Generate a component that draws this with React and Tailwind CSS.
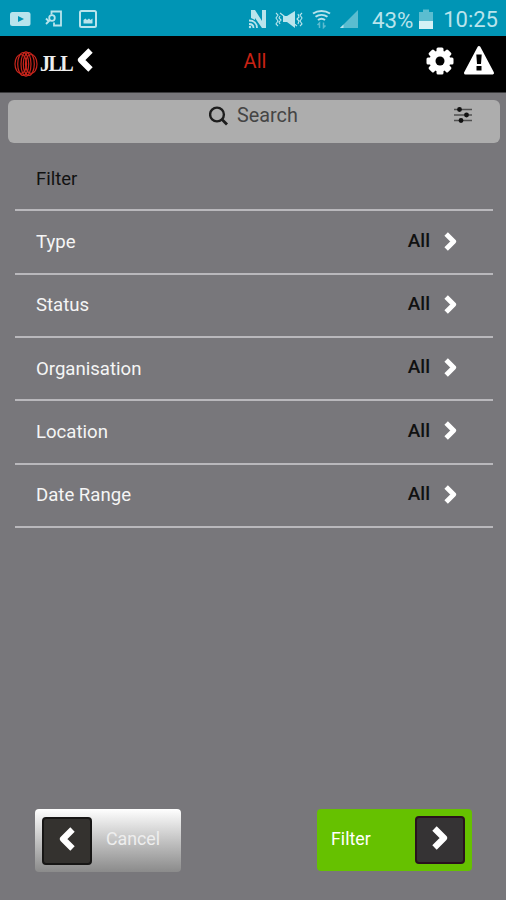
import React from "react";

const filters = [
  { name: "Type", value: "All" },
  { name: "Status", value: "All" },
  { name: "Organisation", value: "All" },
  { name: "Location", value: "All" },
  { name: "Date Range", value: "All" },
];

const Chevron = ({ left, className }) => (
  <svg viewBox="0 0 16 24" fill="none" stroke="currentColor" strokeWidth="6.2" strokeLinejoin="round" className={className}>
    <path d={left ? "M13.5 2.5 4 12l9.5 9.5" : "M2.5 2.5 12 12l-9.5 9.5"} />
  </svg>
);

const StatusBar = () => (
  <div className="flex h-9 shrink-0 items-center bg-[#0095b5] pl-2.5 pr-2 pt-0.5 text-[#b9e4ec]">
    <svg viewBox="0 0 21 14" className="h-3.5 w-[21px]">
      <rect width="20.5" height="14" rx="2.5" fill="currentColor" />
      <path d="M8 4v6l6-3z" fill="#0095b5" />
    </svg>
    <svg viewBox="0 0 18 18" fill="none" stroke="currentColor" strokeWidth="1.8" className="ml-3.5 h-[18px] w-[18px]">
      <path d="M6.5 4.5V1.5H16v14H9v-3" />
      <circle cx="7" cy="8" r="2.8" />
      <path d="m5 10-4 4M1 8.5l3 3" />
    </svg>
    <svg viewBox="0 0 18 18" className="ml-4 h-[18px] w-[18px]">
      <rect x="1" y="1" width="16" height="16" rx="1.5" fill="none" stroke="currentColor" strokeWidth="2" />
      <path d="M4.5 13.5V10l2-1.500L8 10l2-1.500 1.500 1.500 2-1.500v5z" fill="currentColor" />
    </svg>

    <svg viewBox="0 0 19 20" className="ml-[151px] h-5 w-[19px]">
      <path d="M3 9V1h4l7 11V1h4v18h-4L7 9v2" fill="currentColor" />
      <path d="M1 11.5c5 0 8 3 8 7.5M1 15c3 0 4.500 1.500 4.500 4" fill="none" stroke="currentColor" strokeWidth="1.8" />
      <circle cx="2" cy="18" r="1.2" fill="currentColor" />
    </svg>
    <svg viewBox="0 0 28 20" className="ml-2 h-5 w-7">
      <path d="M8 7h4l8-5v17l-8-6H8z" fill="currentColor" />
      <path
        d="m5 4 17 13M1 4l2 2-2 3 2 3-2 3 2 2M5 7l-1 2 2 2-2 2 1 2M27 4l-2 2 2 3-2 3 2 3-2 2M23 5l1 3-2 2 2 2-1 3"
        fill="none"
        stroke="currentColor"
        strokeWidth="1.1"
      />
    </svg>
    <svg viewBox="0 0 20 20" fill="none" stroke="currentColor" className="ml-2 h-5 w-5">
      <path d="M2 4.500c5-3.500 12-3.500 17 0M4.500 7.800c3.500-2.500 8.500-2.500 12 0M7 11c2-1.500 5-1.500 7 0" strokeWidth="2" />
      <path d="M8.500 19v-5l-2 2M12.500 13.500v5l2-2" strokeWidth="1.5" opacity="0.5" />
    </svg>
    <svg viewBox="0 0 20 20" className="ml-2 h-5 w-5">
      <path d="M19 1v18H1z" fill="#5bbdd0" />
      <path d="M4.500 15.500V19H1z" fill="currentColor" />
    </svg>
    <span className="ml-[13px] w-[42px] whitespace-nowrap pt-0.5 text-[22.300px] leading-none">43%</span>
    <svg viewBox="0 0 14 20" className="ml-[5px] h-5 w-3.5">
      <path d="M0 3h4V0.500h6V3h4v9H0z" fill="#5bbdd0" />
      <path d="M0 12h14v8H0z" fill="#d4f1f5" />
    </svg>
    <span className="ml-auto whitespace-nowrap pt-0.5 text-[22px] leading-none">10:25</span>
  </div>
);

const Logo = () => (
  <div className="flex items-center">
    <svg viewBox="0 0 24 26" fill="none" stroke="#c9251c" strokeWidth="1.2" className="h-[26px] w-6">
      <ellipse cx="6.800" cy="13" rx="5.800" ry="9.500" />
      <ellipse cx="9.200" cy="13" rx="5.500" ry="11.500" />
      <ellipse cx="12" cy="13" rx="5" ry="12.200" />
      <ellipse cx="14.800" cy="13" rx="5.500" ry="11.500" />
      <ellipse cx="17.200" cy="13" rx="5.800" ry="9.500" />
    </svg>
    <span className="ml-0.5 w-[33px] whitespace-nowrap">
      <span className="inline-block origin-left scale-x-[0.84] font-['Liberation_Serif',serif] text-[24px] font-bold leading-[26px] tracking-[-2px] text-[#eeeeee]">
        JLL
      </span>
    </span>
  </div>
);

const Header = () => (
  <header className="grid h-[57px] shrink-0 grid-cols-[1fr_auto_1fr] items-start border-b border-[#3b3b3d] bg-black pl-3.5 pr-[11px] pt-2 text-white">
    <div className="flex items-start">
      <div className="pt-1.5">
        <Logo />
      </div>
      <Chevron left className="ml-1 mt-1 h-6 w-4" />
    </div>
    <h1 className="pl-px pt-[5px] text-[20px] leading-6 text-[#c92214]">All</h1>
    <div className="flex items-start justify-end">
      <svg viewBox="0 0 28 28" className="mt-[3px] h-7 w-7">
        <g fill="currentColor">
          <rect x="10.500" y="0.500" width="7" height="27" rx="1.500" />
          <rect x="10.500" y="0.500" width="7" height="27" rx="1.500" transform="rotate(45 14 14)" />
          <rect x="10.500" y="0.500" width="7" height="27" rx="1.500" transform="rotate(90 14 14)" />
          <rect x="10.500" y="0.500" width="7" height="27" rx="1.500" transform="rotate(135 14 14)" />
          <circle cx="14" cy="14" r="10.500" />
        </g>
        <circle cx="14" cy="14" r="4.500" fill="#000" />
      </svg>
      <svg viewBox="0 0 32 30" className="ml-[9px] mt-px h-[30px] w-8">
        <path d="M16 2.500 29.500 28h-27z" fill="currentColor" stroke="currentColor" strokeWidth="3" strokeLinejoin="round" />
        <path d="M13.300 9.500h5.400l-.7 9.500h-4zM13.500 21h5v4.500h-5z" fill="#000" />
      </svg>
    </div>
  </header>
);

const SearchBar = () => (
  <div className="ml-[7.5px] mr-[6.5px] mt-[7px] grid h-[43px] shrink-0 grid-cols-[1fr_auto_1fr] items-start rounded-md bg-[#adadad] pt-[5px]">
    <span />
    <div className="flex items-center">
      <svg viewBox="0 0 20 20" fill="none" stroke="#1d1d1d" className="h-5 w-5">
        <circle cx="8" cy="8.500" r="6.900" strokeWidth="2.400" />
        <path d="m12.800 13.300 5.200 5.200" strokeWidth="2.800" />
      </svg>
      <span className="ml-2 pt-px text-[19.8px] leading-5 text-[#454545]">Search</span>
    </div>
    <svg viewBox="0 0 18 18" className="mr-7 mt-px h-[18px] w-[18px] justify-self-end">
      <path d="M0 3.500h18M0 9h18M0 14.500h18" stroke="#505050" strokeWidth="1.600" />
      <g fill="#111">
        <circle cx="5.500" cy="3.500" r="2.400" />
        <circle cx="12.500" cy="9" r="2.400" />
        <circle cx="7" cy="14.500" r="2.400" />
      </g>
    </svg>
  </div>
);

const FilterRow = ({ name, value }) => (
  <li className="flex h-[63.3px] items-center border-b-2 border-[#b9b8bc] pl-[21px] pr-9">
    <span className="pt-0.5 text-[18.6px] text-[#f5f5f5]">{name}</span>
    <span className="ml-auto pb-0.5 text-[19px] font-medium text-[#111]">{value}</span>
    <Chevron className="mb-0.5 ml-3.5 h-[19px] w-[13px]" />
  </li>
);

const App = () => {
  return (
    <div className="flex h-[900px] w-[506px] flex-col overflow-hidden bg-[#78777b] font-[Roboto,sans-serif] text-white">
      <StatusBar />
      <Header />
      <SearchBar />
      <ul className="ml-[15px] mr-[13px] mt-1">
        <li className="flex h-[64.4px] items-center border-b-2 border-[#b9b8bc] pl-[21px] pt-[3px] text-[18.5px] text-[#111]">
          Filter
        </li>
        {filters.map((filter) => (
          <FilterRow key={filter.name} name={filter.name} value={filter.value} />
        ))}
      </ul>
      <div className="mb-7 ml-[35px] mr-[34px] mt-auto flex items-start justify-between">
        <button className="flex h-[63px] w-[146px] items-center rounded bg-linear-to-b from-white to-[#8b8b8b] pl-[7px]">
          <span className="flex h-12 w-[50px] items-center justify-center rounded border-2 border-[#171615] bg-[#34322f]">
            <Chevron left className="mb-1 h-6 w-4" />
          </span>
          <span className="ml-3.5 pb-0.5 text-[17.8px] text-[#eeeeee]">Cancel</span>
        </button>
        <button className="flex h-[62px] w-[155px] items-center justify-between rounded bg-[#66c100] pl-3.5 pr-[7px]">
          <span className="pb-0.5 text-[17.8px]">Filter</span>
          <span className="flex h-12 w-[50px] items-center justify-center rounded border-2 border-[#29121d] bg-[#353334]">
            <Chevron className="mb-1 h-6 w-4" />
          </span>
        </button>
      </div>
    </div>
  );
};

export default App;
